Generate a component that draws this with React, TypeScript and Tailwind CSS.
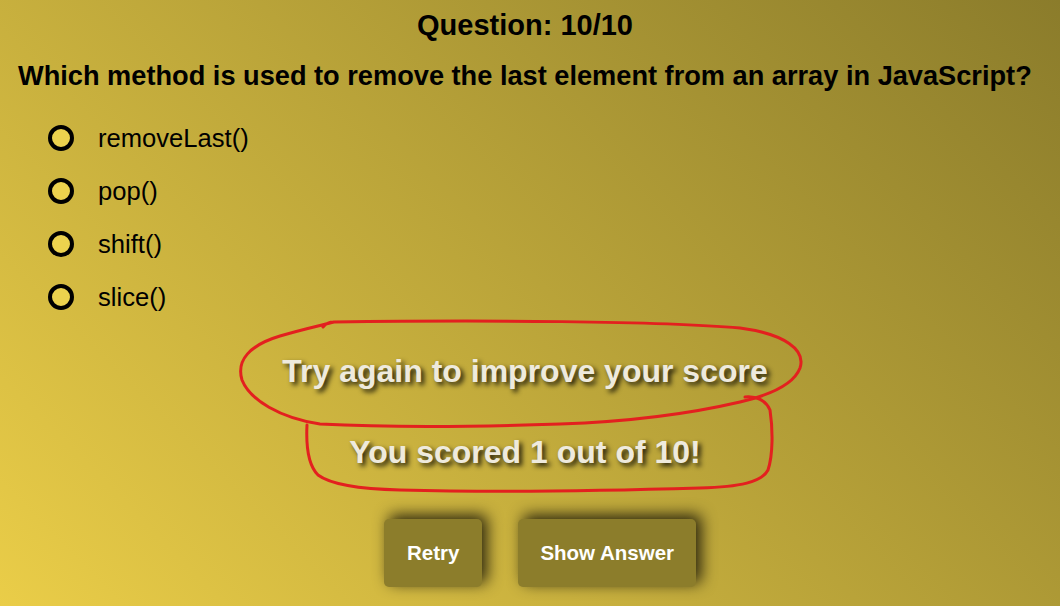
import React from 'react';

const options = ['removeLast()', 'pop()', 'shift()', 'slice()'];

export default function App() {
  return (
    <div
      className="relative w-full h-[606px] overflow-hidden bg-[linear-gradient(45deg,#eacd48,#8b7c2b)] text-black"
      style={{ fontFamily: '"Liberation Sans", Arial, sans-serif' }}
    >
      <div className="flex flex-col pt-[8px]">
        <h1 className="text-center text-[29px] leading-[34px] font-bold pr-[10px]">Question: 10/10</h1>
        <h2 className="mt-[18px] pl-[18px] text-[27.2px] leading-[32px] font-bold whitespace-nowrap">
          Which method is used to remove the last element from an array in JavaScript?
        </h2>

        {/* Options */}
        <div className="mt-[19px] flex flex-col pl-[48px]">
          {options.map((opt) => (
            <label key={opt} className="h-[53px] flex items-center gap-[24px]">
              <span className="w-[26px] h-[26px] rounded-full border-[4px] border-black bg-[#ecd24e]" />
              <span className="text-[25.6px] leading-[30px]">{opt}</span>
            </label>
          ))}
        </div>

        {/* Result */}
        <div className="flex flex-col items-center pr-[10px] text-[32px] leading-[40px] font-bold text-[#eeeadd] [text-shadow:3px_3px_5px_rgba(0,0,0,0.85)]">
          <p className="mt-[28px]">Try again to improve your score</p>
          <p className="mt-[41px]">You scored 1 out of 10!</p>
        </div>

        <div className="mt-[47px] flex justify-center">
          <button className="ml-[20px] px-[23px] h-[68px] rounded-[5px] bg-[#8c7d2b] text-white text-[20.5px] font-bold shadow-[5px_-4px_15px_rgba(0,0,0,0.8)]">
            Retry
          </button>
          <button className="ml-[36px] px-[22px] h-[68px] rounded-[5px] bg-[#8c7d2b] text-white text-[20.5px] font-bold shadow-[5px_-4px_15px_rgba(0,0,0,0.8)]">
            Show Answer
          </button>
        </div>
      </div>

      {/* Red annotation marks */}
      <svg className="absolute inset-0 pointer-events-none" width="1060" height="606" viewBox="0 0 1060 606" fill="none">
        <path
          d="M 323 327 C 326 323 330 322 334 322 C 480 320 660 321 740 328 C 785 334 806 350 800 368 C 794 384 770 395 740 402 C 680 416 620 422 560 424 C 470 427 380 427 320 424 C 280 418 250 400 242 380 C 236 360 250 345 280 336 C 300 330 318 326 334 322"
          stroke="#e3201f"
          strokeWidth="3"
          strokeLinecap="round"
          strokeLinejoin="round"
        />
        <path
          d="M 745 397 C 756 396 766 400 770 410 C 773 430 773 455 768 470 C 762 482 740 487 700 488 C 600 491 480 492 400 490 C 360 489 330 484 318 475 C 308 465 306 445 307 425"
          stroke="#e3201f"
          strokeWidth="3"
          strokeLinecap="round"
          strokeLinejoin="round"
        />
      </svg>
    </div>
  );
}
